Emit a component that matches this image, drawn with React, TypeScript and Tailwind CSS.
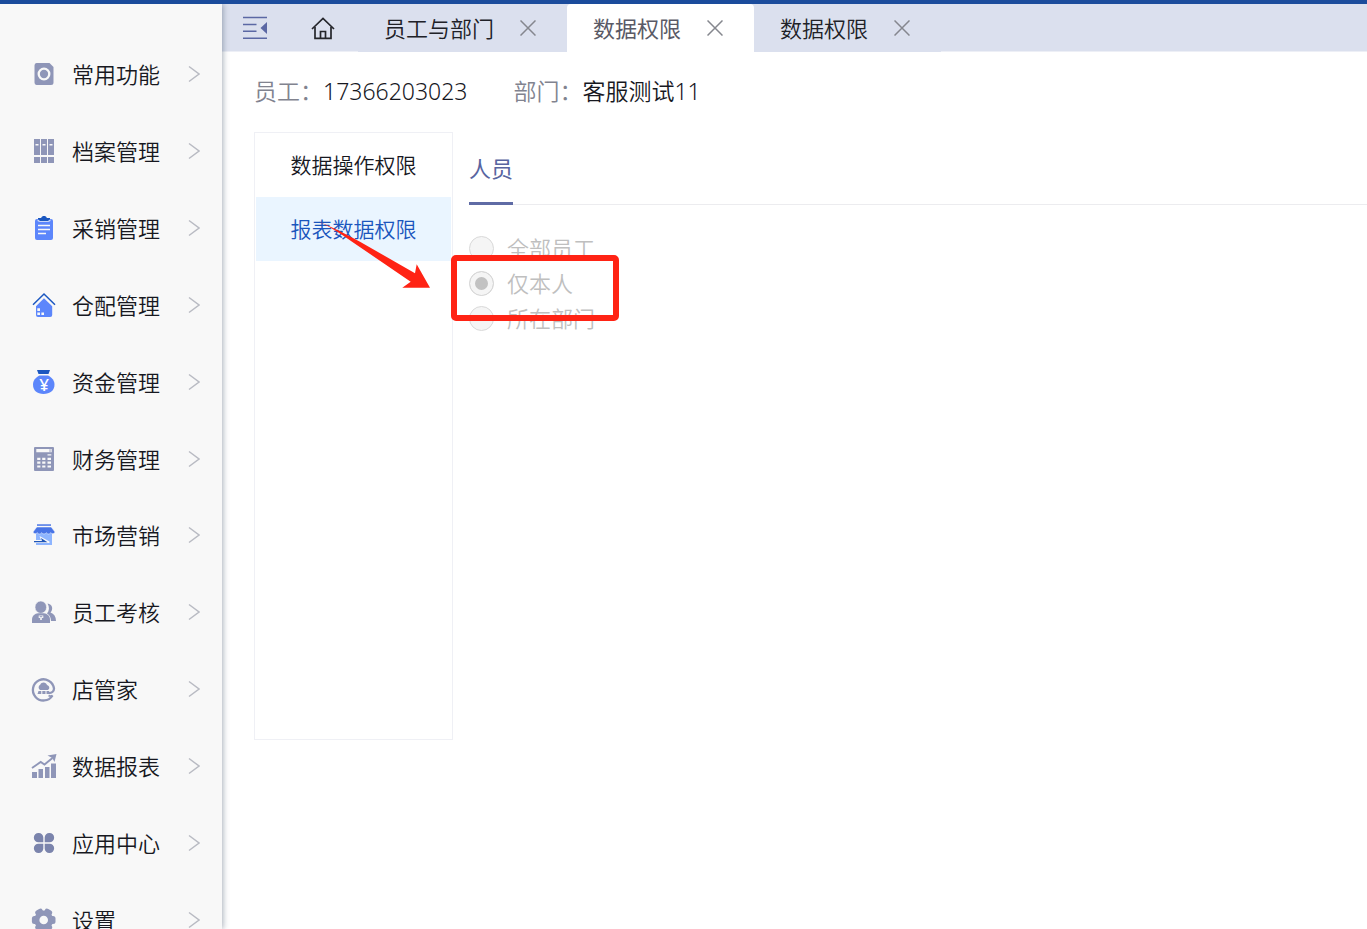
import { useState, type ReactNode } from 'react'
import clsx from 'clsx'

type MenuItem = { label: string; icon: ReactNode }

const GREY = '#8f96b8'
const BLUE = '#5c86fb'
const NAVY = '#1b57c0'
const LIGHT = '#f8f8f8'

const menuItems: MenuItem[] = [
  {
    label: '常用功能',
    icon: (
      <>
        <path d="M6.5 3H19.500L23.500 7v15.500a2.500 2.500 0 0 1-2.500 2.500H6.500A2.500 2.500 0 0 1 4.500 22.500v-17A2.500 2.500 0 0 1 6.500 3z" fill={GREY} />
        <circle cx="14" cy="14" r="5.300" fill="none" stroke={LIGHT} strokeWidth="2.300" />
      </>
    ),
  },
  {
    label: '档案管理',
    icon: (
      <>
        {[4, 11, 18].map((x) => (
          <g key={x} fill={GREY}>
            <path d={`M${x} 2h6v16h-6z M${x} 20h6v6h-6z`} />
            <path d={`M${x + 1.5} 7h3v1.500h-3z`} fill={LIGHT} />
          </g>
        ))}
      </>
    ),
  },
  {
    label: '采销管理',
    icon: (
      <>
        <rect x="5" y="5" width="18" height="21" rx="2" fill={BLUE} />
        <path d="M7.500 5.500h13V7c-1 .8-2 1-3 1h-7c-1 0-2-.2-3-1z" fill={LIGHT} opacity=".7" />
        <path d="M8 4h3.200c.6-2.600 5-2.600 5.600 0H20v1.200L18 7h-8L8 5.200z" fill={NAVY} />
        <path d="M8 11.500h12M8 15.500h12M8 19.500h8" stroke={LIGHT} strokeWidth="1.300" />
      </>
    ),
  },
  {
    label: '仓配管理',
    icon: (
      <>
        <path d="M3 13.700 14 3l11 10.700" fill="none" stroke={NAVY} strokeWidth="1.500" />
        <path d="M14 7.200l8.200 8V24a2 2 0 0 1-2 2H8a2 2 0 0 1-2-2v-8.800z" fill={BLUE} />
        <path d="M7.300 17.300H10V20H7.300z M7.300 21.400H10V24H7.300z M11.400 21.400H14V24h-2.600z" fill={LIGHT} />
      </>
    ),
  },
  {
    label: '资金管理',
    icon: (
      <>
        <path d="M7 2h13l-1.500 4h-10z" fill={NAVY} />
        <path d="M9.500 7.500h8.500c4 2 6.500 5 6.500 9 0 6-4.500 9.500-11 9.500S3 22.500 3 16.500c0-4 2.500-7 6.500-9z" fill={BLUE} />
        <text x="14" y="22.500" textAnchor="middle" fill="#fff" className="font-['Noto_Sans'] text-[17px] font-medium">¥</text>
      </>
    ),
  },
  {
    label: '财务管理',
    icon: (
      <>
        <rect x="4" y="2" width="20" height="24" rx="1" fill={GREY} />
        <path d="M6.300 4h15.400v3.300H6.300z M17.500 9.200h3.800v1.300h-3.800z" fill={LIGHT} />
        <path d="M20 4.200v3" stroke={GREY} strokeWidth=".8" />
        {[12.7, 16.5, 20.4].map((y) => (
          <path key={y} d={`M7.200 ${y}h3.200v2.200H7.200z M12.200 ${y}h3.200v2.200h-3.200z M17.500 ${y}h3.500v2.200h-3.500z`} fill={LIGHT} />
        ))}
      </>
    ),
  },
  {
    label: '市场营销',
    icon: (
      <>
        <path d="M7 3.300h14v1.500H7z" fill="#4874e6" />
        <path d="M6 12h16v12H6z" fill="#8eb5ff" />
        <path d="M6.800 6h14.400l3.800 5c-.6 2-3 2.300-4.200.7-1.200 1.700-3.300 1.700-4.500 0-1.200 1.700-3.400 1.700-4.600 0-1.200 1.700-3.300 1.700-4.500 0C6 13.300 3.600 13 3 11z" fill="#4874e6" stroke={LIGHT} strokeWidth=".5" />
        <path d="M3.500 19h7.500l-1.500-4 10 5.500v1.500h-16z" fill={LIGHT} />
        <path d="M4 20h8l-1-3 6.500 4.200H4z" fill="#1f56b8" />
      </>
    ),
  },
  {
    label: '员工考核',
    icon: (
      <g fill={GREY}>
        <path d="M17.500 5.500c5 .5 6 5.500 3 9 3.500 1.200 5.500 4 5.500 8.500h-5c-.2-4-1.500-6-4-7.500 2.500-3 2.500-6.500.5-10z" />
        <ellipse cx="10.800" cy="9.200" rx="5.800" ry="6.200" stroke={LIGHT} strokeWidth=".6" />
        <path d="M2 25v-3.500c0-3.700 3-6 6-6.300h6c3 .3 6 2.600 6 6.300V25z" />
        <path d="M8.700 17.500h4.600v2.500h-1.500v2H10.200v-2H8.700z" fill={LIGHT} />
        <path d="M9.700 18.200h2.600v1H9.700z" />
      </g>
    ),
  },
  {
    label: '店管家',
    icon: (
      <>
        <path d="M22.500 20.500A10.600 10.600 0 1 1 24 13.500c0 3-2.500 4.500-5 4.500" fill="none" stroke={GREY} strokeWidth="2.300" />
        <path d="M22.500 20.500c-1.500.8-3 .6-4 .2" fill="none" stroke={GREY} strokeWidth="1.800" />
        <path d="M10 15a3 3 0 0 1 .2-5.200c1.200-3.300 6-3 6.800.2 2.800.7 3 4.200.8 5z" fill={GREY} />
        <path d="M8.500 16h2.800v3H7.500z M12.300 16h3.200v3h-3.200z M16.500 16h2.500v3h-2.500z" fill={GREY} />
      </>
    ),
  },
  {
    label: '数据报表',
    icon: (
      <>
        <path d="M2 20h5v6H2z M8.500 17H13v9H8.500z M15 15h4.500v11H15z M21 11.500h5V26h-5z" fill={GREY} />
        <path d="M2 16l8.700-6 3.800 2.500L22.500 6" fill="none" stroke={GREY} strokeWidth="1.900" />
        <path d="M17.500 3.500 26.500 2l-2 8-2.200-4z" fill={GREY} />
      </>
    ),
  },
  {
    label: '应用中心',
    icon: (
      <g fill="#7b84ac">
        <path d="M8.500 4A4.500 4.500 0 0 1 13.300 8.500v4.800H8.500a4.600 4.600 0 0 1 0-9.300z" />
        <path d="M19.500 4A4.500 4.500 0 0 0 14.700 8.500v4.800h4.800a4.600 4.600 0 0 0 0-9.300z" />
        <path d="M8.500 24a4.500 4.500 0 0 0 4.800-4.500v-4.800H8.500a4.600 4.600 0 0 0 0 9.300z" />
        <path d="M19.500 24a4.500 4.500 0 0 1-4.800-4.500v-4.800h4.800a4.600 4.600 0 0 1 0 9.300z" />
      </g>
    ),
  },
  {
    label: '设置',
    icon: (
      <>
        <circle cx="13.700" cy="14" r="9.500" fill={GREY} />
        {[0, 60, 120, 180, 240, 300].map((a) => (
          <rect key={a} x="19" y="10" width="6.500" height="8" rx="2.500" fill={GREY} transform={`rotate(${a} 13.700 14)`} />
        ))}
        <circle cx="13.700" cy="14" r="4.300" fill={LIGHT} />
      </>
    ),
  },
]

const tabs = [
  { id: 1, label: '员工与部门' },
  { id: 2, label: '数据权限' },
  { id: 3, label: '数据权限' },
]

const permissionMenus = ['数据操作权限', '报表数据权限']
const scopes = ['全部员工', '仅本人', '所在部门']

function Sidebar() {
  return (
    <aside className="relative z-10 w-[222px] shrink-0 overflow-hidden bg-[#f8f8f8] pt-8 shadow-[1px_0_6px_rgba(60,75,100,0.45)]">
      <nav>
        <ul className="flex h-[922px] flex-col">
          {menuItems.map((item) => (
            <li key={item.label} className="flex flex-1">
              <button type="button" className="flex w-full items-center pr-[22px] pl-[30px] text-left">
                <svg viewBox="0 0 28 28" className="mr-[14px] h-7 w-7 shrink-0" aria-hidden="true">
                  {item.icon}
                </svg>
                <span className="flex-1">{item.label}</span>
                <svg viewBox="0 0 12 18" className="h-[18px] w-3" fill="none" stroke="#b9bbc3" strokeWidth="1.500" aria-hidden="true">
                  <path d="M1 1.500 11 9 1 16.500" />
                </svg>
              </button>
            </li>
          ))}
        </ul>
      </nav>
    </aside>
  )
}

function TabBar({ active, onChange }: { active: number; onChange: (id: number) => void }) {
  return (
    <div className="flex h-12 bg-[#dbe0ee]">
      <div className="flex w-[136px] items-center border-b border-[#edeff6] pl-[21px]">
        <button type="button" aria-label="收起菜单">
          <svg viewBox="0 0 24 24" className="h-6 w-6" fill="none" stroke="#5b68a4" strokeWidth="1.500">
            <path d="M0 1.500h24M0 8.500h13.500M0 15.300h13.500M0 22.300h24" />
            <path d="M24 6v12l-6.500-6z" fill="#5b68a4" stroke="none" />
          </svg>
        </button>
        <button type="button" aria-label="首页" className="ml-11">
          <svg viewBox="0 0 24 24" className="h-6 w-6" fill="none" stroke="#25262b" strokeWidth="1.700">
            <path d="M1 13 12 2.500 23 13" />
            <path d="M4 11v11.300h16V11" />
            <path d="M9.500 22v-6.500h5V22" />
          </svg>
        </button>
      </div>
      {tabs.map((tab) => (
        <div
          key={tab.id}
          className={clsx(
            'flex items-center gap-[26px] pr-[31px] pl-[26px]',
            tab.id === active ? 'rounded-t-sm bg-white font-normal text-[#5a5a66]' : 'text-[#202127]'
          )}
        >
          <button type="button" onClick={() => onChange(tab.id)}>
            {tab.label}
          </button>
          <button type="button" aria-label={`关闭${tab.label}`}>
            <svg viewBox="0 0 16 16" className="h-4 w-4" stroke="#85878e" strokeWidth="1.500">
              <path d="M.5.5l15 15M15.500.5l-15 15" />
            </svg>
          </button>
        </div>
      ))}
      <div className="flex-1 border-b border-[#edeff6]" />
    </div>
  )
}

export default function App() {
  const [activeTab, setActiveTab] = useState(2)
  const [activeMenu, setActiveMenu] = useState('报表数据权限')

  return (
    <div className="flex h-screen flex-col overflow-hidden border-t-4 border-[#1b4c9c] bg-white font-['Noto_Sans','Noto_Sans_CJK_SC',sans-serif] text-[22px] leading-8 font-[350] text-[#17181f]">
      <div className="flex min-h-0 flex-1">
        <Sidebar />
        <main className="min-w-0 flex-1">
          <TabBar active={activeTab} onChange={setActiveTab} />

          <div className="pt-[23px] pl-8">
            <dl className="flex text-[23px]">
              <dt className="text-[#81838f]">员工：</dt>
              <dd className="mr-[46px]">17366203023</dd>
              <dt className="text-[#81838f]">部门：</dt>
              <dd>客服测试11</dd>
            </dl>

            <div className="relative mt-[25px] flex gap-4">
              <ul className="h-[608px] w-[199px] shrink-0 border border-[#eff0f5] px-px text-[21px]">
                {permissionMenus.map((name) => (
                  <li key={name}>
                    <button
                      type="button"
                      onClick={() => setActiveMenu(name)}
                      className={clsx('h-16 w-full', name === activeMenu && 'bg-[#eaf5ff] text-[#1a55bd]')}
                    >
                      {name}
                    </button>
                  </li>
                ))}
              </ul>

              <section className="min-w-0 flex-1">
                <div className="flex h-[73px] border-b border-[#ececef]">
                  <button type="button" className="-mb-px h-[73px] border-b-3 border-[#5f6ba5] pt-0.5 font-normal text-[#5864a0]">
                    人员
                  </button>
                </div>
                <fieldset disabled className="mt-[27px] flex flex-col gap-[3px] text-[#bfbfbf]">
                  {scopes.map((scope) => (
                    <label key={scope} className="flex items-center gap-[13px]">
                      <input
                        type="radio"
                        name="scope"
                        defaultChecked={scope === '仅本人'}
                        className="h-[25px] w-[25px] appearance-none rounded-full border border-[#d9d9d9] bg-[#f5f5f5] checked:bg-[#c2c2c2] checked:shadow-[inset_0_0_0_5px_#f5f5f5]"
                      />
                      {scope}
                    </label>
                  ))}
                </fieldset>
              </section>

              {/* highlight mark and arrow over the selected option */}
              <div className="pointer-events-none absolute top-[123px] left-[197px] h-[66px] w-[168px] rounded-[5px] border-6 border-[#ff2314]" />
              <svg
                viewBox="0 0 114 70"
                className="pointer-events-none absolute top-[88px] left-[64px] h-[70px] w-[114px]"
                fill="#ff2314"
                aria-hidden="true"
              >
                <path d="M1 1.500 Q22 10.500 42 21.700 L97 53.300 L98.700 44.300 L112 67.700 L84.300 67.700 L92.700 61.700 L33.700 21.500 Q17 9.500 1 1.500z" />
              </svg>
            </div>
          </div>
        </main>
      </div>
    </div>
  )
}
